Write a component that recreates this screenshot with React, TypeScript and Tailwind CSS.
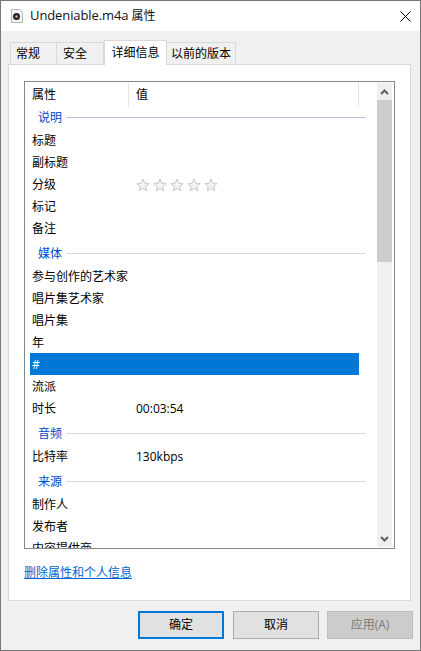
const font = { fontFamily: '"Open Sans", "Noto Sans CJK SC", sans-serif' };

function Row({ name, value, selected }: { name: string; value?: React.ReactNode; selected?: boolean }) {
  return (
    <div className={`flex items-center h-[22px] pt-[2px] w-[329px] shrink-0 ${selected ? "bg-[#0078d7] text-white" : "text-black"}`}>
      <div className="w-[106px] pl-[2px] shrink-0">{name}</div>
      <div>{value}</div>
    </div>
  );
}

function Group({ label, first }: { label: string; first?: boolean }) {
  return (
    <div className={`flex items-center shrink-0 pl-[8px] pr-[11px] gap-[4px] text-[#0046c8] ${first ? "h-[22px] pb-[2px]" : "h-[26px] pt-[2px]"}`}>
      <span className="pt-[2px]">{label}</span>
      <div className={`flex-1 h-px ${first ? "bg-[#b4c0da]" : "bg-[#d5d9e6]"}`} />
    </div>
  );
}

function Stars() {
  return (
    <div className="flex gap-[3px] -mt-[1px]">
      {[0, 1, 2, 3, 4].map((i) => (
        <svg key={i} width="14" height="14" viewBox="0 0 14 14" fill="#f4f4f4" stroke="#c8c8c8" strokeWidth="1">
          <path d="M7 1l1.7 4.2 4.5.3-3.5 2.9 1.1 4.4L7 10.4l-3.8 2.4 1.1-4.4L.8 5.5l4.5-.3z" />
        </svg>
      ))}
    </div>
  );
}

function Button({ label, kind }: { label: string; kind?: "default" | "disabled" }) {
  const cls =
    kind === "default"
      ? "border-2 border-[#0078d7] bg-[#e1e1e1] text-black"
      : kind === "disabled"
        ? "border border-[#bfbfbf] bg-[#cccccc] text-[#7a7a7a]"
        : "border border-[#adadad] bg-[#e1e1e1] text-black";
  return <div className={`w-[86px] h-[28px] flex items-center justify-center ${cls}`}>{label}</div>;
}

export default function App() {
  return (
    <div className="w-[421px] h-[651px] flex flex-col border border-[#777777] bg-[#f0f0f0] text-[12px] overflow-hidden" style={font}>
      <div className="h-[30px] bg-white flex items-center shrink-0 pl-[10px] pr-[9px]">
        <svg width="12" height="14" viewBox="0 0 12 14" className="mr-[7px]">
          <path d="M.5.5h8l3 3v10H.5z" fill="#f5f5f5" stroke="#b5b5b5" />
          <circle cx="5.5" cy="7.5" r="3.5" fill="#222" />
          <circle cx="5.5" cy="7.5" r="1.2" fill="#e8b0a0" />
        </svg>
        <span className="text-[12px] text-[#111] flex-1">
          <span className="text-[13px] tracking-[-0.1px]">Undeniable.m4a</span> 属性
        </span>
        <svg width="11" height="11" viewBox="0 0 11 11" fill="none" stroke="#000000" strokeWidth="1">
          <path d="M.5.5l10 10M10.5.5l-10 10" />
        </svg>
      </div>

      <div className="flex-1 flex flex-col pl-[7px] pr-[9px]">
        <div className="flex items-end h-[33px] pl-[2px] shrink-0 relative z-10">
          <div className="w-[47px] h-[22px] border border-b-0 border-[#d9d9d9] bg-[#f0f0f0] pl-[5px] flex items-center">常规</div>
          <div className="w-[47px] h-[22px] border border-b-0 border-l-0 border-[#d9d9d9] bg-[#f0f0f0] pl-[6px] flex items-center">安全</div>
          <div className="w-[63px] h-[25px] border border-b-0 border-[#d9d9d9] bg-white flex items-center justify-center -mb-px">详细信息</div>
          <div className="w-[69px] h-[22px] border border-b-0 border-l-0 border-[#d9d9d9] bg-[#f0f0f0] flex items-center justify-center">以前的版本</div>
        </div>

        <div className="h-[537px] border border-[#d9d9d9] bg-white pt-[16px] pl-[15px] pr-[15px] shrink-0">
          <div className="h-[468px] border border-[#828790] flex overflow-hidden">
            <div className="flex-1 flex flex-col pl-[5px] overflow-hidden">
              <div className="flex items-center h-[24px] mt-px shrink-0 w-[329px] text-black relative">
                <div className="w-[99px] pl-[2px] h-full flex items-center border-r border-[#e5e5e5]">属性</div>
                <div className="pl-[7px] flex-1 h-full flex items-center border-r border-[#e5e5e5]">值</div>
              </div>
              <Group label="说明" first />
              <Row name="标题" />
              <Row name="副标题" />
              <Row name="分级" value={<Stars />} />
              <Row name="标记" />
              <Row name="备注" />
              <Group label="媒体" />
              <Row name="参与创作的艺术家" />
              <Row name="唱片集艺术家" />
              <Row name="唱片集" />
              <Row name="年" />
              <Row name="#" selected />
              <Row name="流派" />
              <Row name="时长" value="00:03:54" />
              <Group label="音频" />
              <Row name="比特率" value="130kbps" />
              <Group label="来源" />
              <Row name="制作人" />
              <Row name="发布者" />
              <Row name="内容提供商" />
            </div>
            <div className="w-[15px] mr-[2px] mt-[1px] bg-[#f0f0f0] flex flex-col shrink-0 mb-[1px]">
              <div className="h-[17px] flex items-center justify-center">
                <svg width="9" height="6" viewBox="0 0 9 6"><path d="M1 5l3.5-3.5L8 5" fill="none" stroke="#606060" strokeWidth="2" /></svg>
              </div>
              <div className="h-[162px] bg-[#cdcdcd]" />
              <div className="flex-1" />
              <div className="h-[17px] flex items-center justify-center">
                <svg width="9" height="6" viewBox="0 0 9 6"><path d="M1 1l3.5 3.5L8 1" fill="none" stroke="#606060" strokeWidth="2" /></svg>
              </div>
            </div>
          </div>
          <div className="mt-[15px] text-[#0066cc] underline leading-[17px]">删除属性和个人信息</div>
        </div>

        <div className="flex justify-end mt-[10px] -mr-[2px]">
          <Button label="确定" kind="default" />
          <div className="ml-[9px]"><Button label="取消" /></div>
          <div className="ml-[8px]"><Button label="应用(A)" kind="disabled" /></div>
        </div>
      </div>
    </div>
  );
}
